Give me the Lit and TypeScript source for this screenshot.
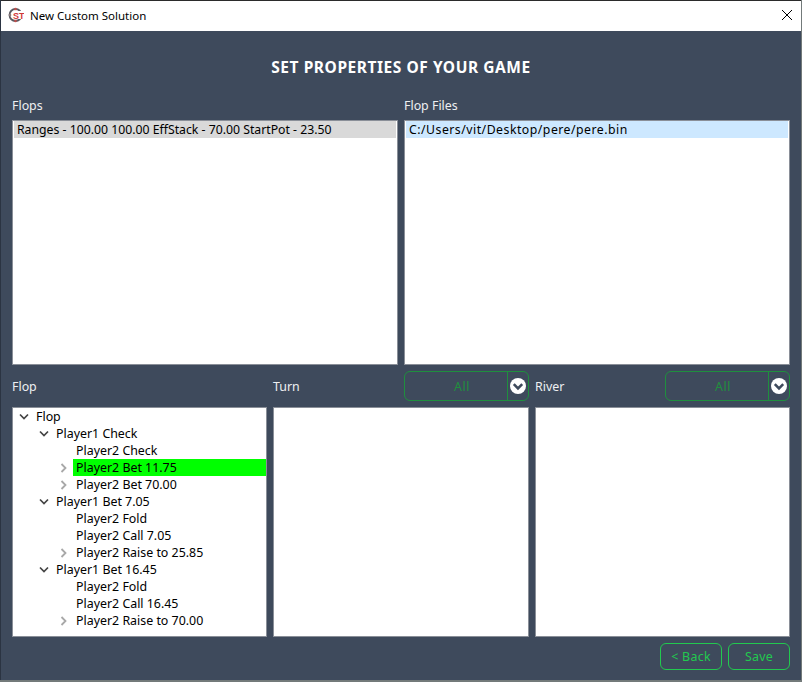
import { LitElement, html, css } from "lit";
import { customElement } from "lit/decorators.js";

type Node = { t: string; d: number; a?: "o" | "c"; sel?: boolean };
const tree: Node[] = [
  { t: "Flop", d: 0, a: "o" },
  { t: "Player1 Check", d: 1, a: "o" },
  { t: "Player2 Check", d: 2 },
  { t: "Player2 Bet 11.75", d: 2, a: "c", sel: true },
  { t: "Player2 Bet 70.00", d: 2, a: "c" },
  { t: "Player1 Bet 7.05", d: 1, a: "o" },
  { t: "Player2 Fold", d: 2 },
  { t: "Player2 Call 7.05", d: 2 },
  { t: "Player2 Raise to 25.85", d: 2, a: "c" },
  { t: "Player1 Bet 16.45", d: 1, a: "o" },
  { t: "Player2 Fold", d: 2 },
  { t: "Player2 Call 16.45", d: 2 },
  { t: "Player2 Raise to 70.00", d: 2, a: "c" },
];

@customElement("app-root")
export class AppRoot extends LitElement {
  static styles = css`
    :host { display: block; width: 802px; height: 682px; background: #737a7a; font-family: "Noto Sans", "Open Sans", sans-serif; font-size: 12.4px; color: #000; }
    * { box-sizing: border-box; }
    .win { width: 801px; height: 680px; border-left: 1px solid #2b3442; display: flex; flex-direction: column; background: #3e4a5c; }
    .title { height: 31px; border-top: 1px solid #2b2b2b; background: #fff; display: flex; align-items: center; padding: 0 0 2px 7px; gap: 6px; flex: none; }
    .title .x { margin-left: auto; margin-right: 8px; display: flex; }
    .title span { font-size: 11.5px; }
    .body { flex: 1; padding: 0 11px 10px 11px; display: flex; flex-direction: column; }
    h1 { margin: 0; height: 66px; padding-top: 26px; text-align: center; font-size: 15.5px; line-height: 20px; font-weight: 700; color: #fff; letter-spacing: .55px; flex: none; }
    .top { display: grid; grid-template-columns: 386px 386px; gap: 6px; height: 268px; flex: none; }
    .col { display: flex; flex-direction: column; }
    .lbl { color: #eef0f2; height: 23px; line-height: 18px; flex: none; }
    .box { background: #fff; border: 1px solid #8a8f98; flex: 1; min-height: 0; padding: 0 1px; }
    .row { height: 17px; line-height: 17px; padding-left: 3px; white-space: nowrap; font-size: 12.25px; }
    .grey { background: #d9d9d9; }
    .blue { background: #cde8ff; letter-spacing: .5px; }
    .bottom { display: grid; grid-template-columns: 255px 256px 255px; gap: 6px; margin-top: 6px; }
    .hdr { height: 30px; display: flex; align-items: center; justify-content: space-between; color: #eef0f2; }
    .combo { width: 125px; height: 30px; border: 1px solid #1f8f3e; border-radius: 6px; display: flex; }
    .combo .v { flex: 1; text-align: center; line-height: 30px; color: #1f8f3e; border-right: 1px solid #1f8f3e; padding-left: 12px; letter-spacing: .5px; }
    .combo .b { width: 20px; display: flex; align-items: center; justify-content: center; }
    .tree { height: 230px; flex: none; margin-top: 6px; padding: 0; }
    .tree .n { height: 17px; display: flex; align-items: center; white-space: nowrap; }
    .tree .ar { width: 16px; height: 17px; padding-right: 2px; flex: none; display: flex; align-items: center; justify-content: center; }
    .tree .t { flex: 1; height: 17px; line-height: 17px; padding-left: 3px; }
    .tree .sel { background: #00ff00; }
    .foot { display: flex; justify-content: flex-end; gap: 6px; margin-top: 6px; }
    .btn { width: 62px; height: 27px; border: 1px solid #22c94f; border-radius: 6px; color: #22c94f; text-align: center; line-height: 25px; letter-spacing: .3px; }
  `;

  arrow(kind?: "o" | "c") {
    if (kind === "o")
      return html`<svg width="10" height="8" viewBox="0 0 10 8"><path d="M1 1.5 5 5.5 9 1.5" fill="none" stroke="#444" stroke-width="1.7"/></svg>`;
    if (kind === "c")
      return html`<svg width="8" height="10" viewBox="0 0 8 10"><path d="M1.5 1 5.5 5 1.5 9" fill="none" stroke="#a8a8a8" stroke-width="1.8"/></svg>`;
    return null;
  }

  combo() {
    return html`<div class="combo"><div class="v">All</div><div class="b">
      <svg width="18" height="18" viewBox="0 0 18 18"><circle cx="9" cy="9" r="8" fill="#fff"/><path d="M4.8 7.2 9 11.4 13.2 7.2" fill="none" stroke="#3e4a5c" stroke-width="2.6"/></svg>
    </div></div>`;
  }

  render() {
    return html`<div class="win">
      <div class="title">
        <svg width="16" height="16" viewBox="0 0 16 16">
          <circle cx="7.5" cy="8" r="6" fill="none" stroke="#5a5a62" stroke-width="1.8"/>
          <circle cx="7.5" cy="2" r="1.3" fill="#c0504d"/>
          <circle cx="7.5" cy="14" r="1.3" fill="#c0504d"/>
          <circle cx="2" cy="8" r="1.3" fill="#8a7a7a"/>
          <rect x="5" y="4" width="11" height="8" fill="#fff"/>
          <text x="5" y="11.5" font-size="9" font-weight="700" fill="#d0383a" font-family="Liberation Sans">ST</text>
        </svg>
        <span>New Custom Solution</span>
        <div class="x"><svg width="12" height="12" viewBox="0 0 12 12"><path d="M1 1 11 11M11 1 1 11" stroke="#000" stroke-width="1"/></svg></div>
      </div>
      <div class="body">
        <h1>SET PROPERTIES OF YOUR GAME</h1>
        <div class="top">
          <div class="col"><div class="lbl">Flops</div><div class="box"><div class="row grey">Ranges - 100.00 100.00 EffStack - 70.00 StartPot - 23.50</div></div></div>
          <div class="col"><div class="lbl">Flop Files</div><div class="box"><div class="row blue">C:/Users/vit/Desktop/pere/pere.bin</div></div></div>
        </div>
        <div class="bottom">
          <div class="col"><div class="hdr">Flop</div>
            <div class="box tree">${tree.map(
              (n) => html`<div class="n" style="padding-left:${n.d * 20 + 4}px"><div class="ar">${this.arrow(n.a)}</div><div class="t ${n.sel ? "sel" : ""}">${n.t}</div></div>`
            )}</div></div>
          <div class="col"><div class="hdr">Turn ${this.combo()}</div><div class="box tree"></div></div>
          <div class="col"><div class="hdr">River ${this.combo()}</div><div class="box tree"></div></div>
        </div>
        <div class="foot">
          <div class="btn">&lt; Back</div>
          <div class="btn">Save</div>
        </div>
      </div>
    </div>`;
  }
}
